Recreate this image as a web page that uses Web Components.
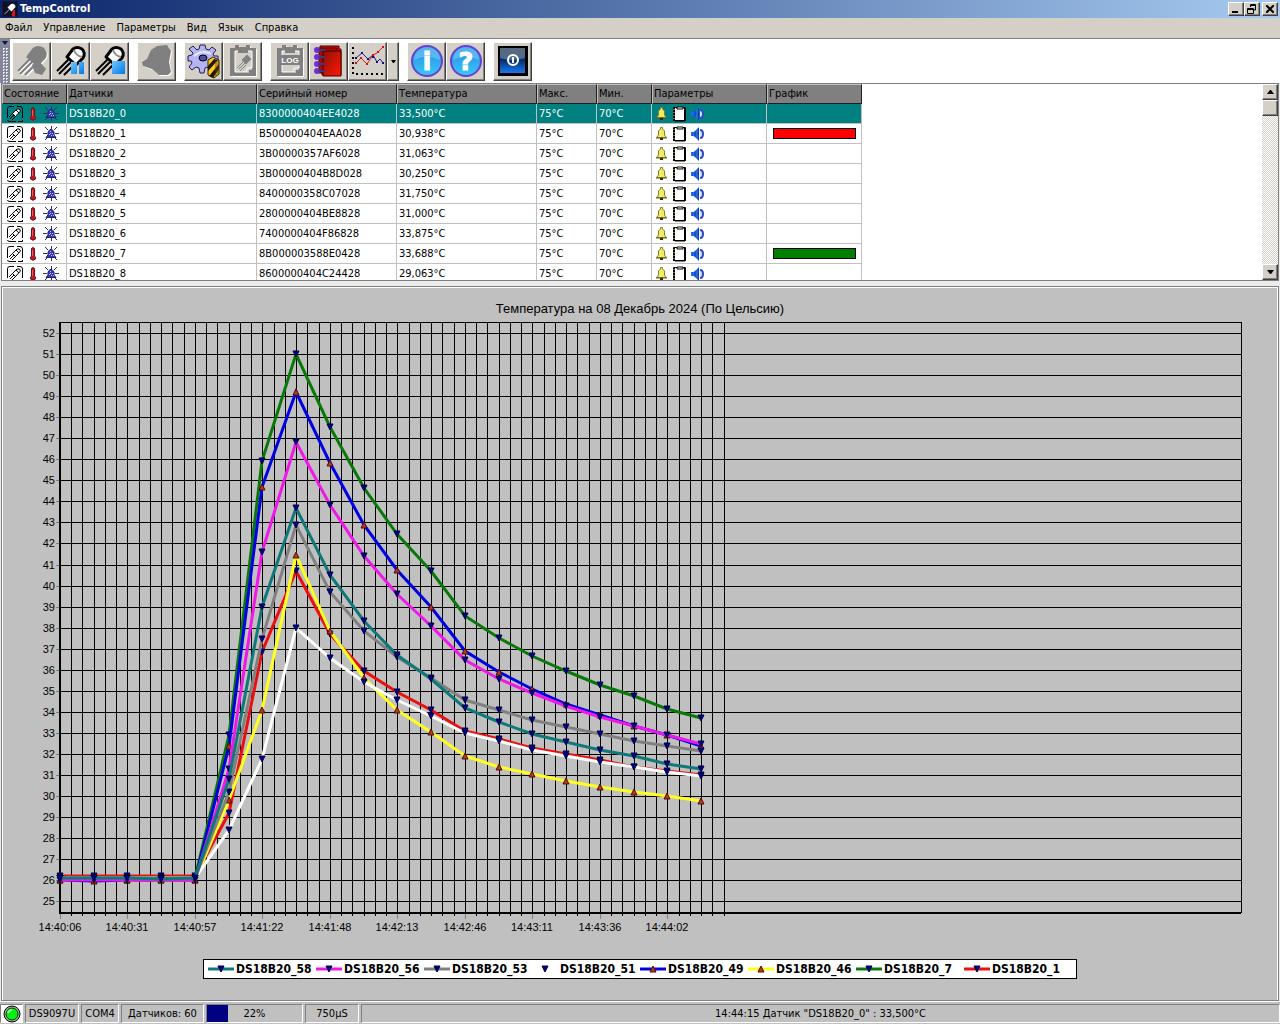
<!DOCTYPE html>
<html lang="ru">
<head>
<meta charset="utf-8">
<title>TempControl</title>
<style>
  html, body { height: 100%; }
  body {
    margin: 0;
    display: flex;
    flex-direction: column;
    overflow: hidden;
    background: #ececec;
    color: #000;
    font: 11px/14px Tahoma, "DejaVu Sans Condensed", "Noto Sans", sans-serif;
  }
</style>
</head>
<body>
<tc-titlebar>TempControl</tc-titlebar>
<tc-menubar>
  <tc-menu>Файл</tc-menu>
  <tc-menu>Управление</tc-menu>
  <tc-menu>Параметры</tc-menu>
  <tc-menu>Вид</tc-menu>
  <tc-menu>Язык</tc-menu>
  <tc-menu>Справка</tc-menu>
</tc-menubar>
<tc-toolbar></tc-toolbar>
<tc-sensors></tc-sensors>
<tc-chart>Температура на 08 Декабрь 2024 (По Цельсию)</tc-chart>
<tc-statusbar>
  <tc-cell kind="led"></tc-cell>
  <tc-cell kind="port">DS9097U</tc-cell>
  <tc-cell kind="com">COM4</tc-cell>
  <tc-cell kind="count">Датчиков: 60</tc-cell>
  <tc-cell kind="load" value="22">22%</tc-cell>
  <tc-cell kind="delay">750µS</tc-cell>
  <tc-cell kind="message">14:44:15 Датчик "DS18B20_0" : 33,500°C</tc-cell>
</tc-statusbar>

<script>
"use strict";

const BEVEL = `
  border: 1px solid;
  border-color: #fff #404040 #404040 #fff;
  box-shadow: inset -1px -1px 0 #808080;
  background: #d4d0c8;`;

const probe = (line, fill, side) => `
  <path d="M2 26 14 14M4 29 17 16M9 30 21 18" fill="none" stroke="${line}" stroke-width="2"/>
  <path d="M12 12 18 4Q22 1 27 4Q31 8 28 13L21 20Z" fill="${fill}"/>
  <path d="M12 12 18 4Q22 1 27 4Q31 8 28 13L21 20Z" fill="none" stroke="${line}" stroke-width="3" stroke-linejoin="round"/>
  <path d="M19 5Q21 11 27 12" fill="none" stroke="${side}" stroke-width="2"/>`;

const clip = (inner) => `
  <g fill="#fff" transform="translate(1 1)"><path d="M3 3H8V0H12V2H19V0H23V3H29V31H3Z"/></g>
  <path d="M3 3H8V0H12V2H19V0H23V3H29V31H3Z" fill="#808080"/>
  <path d="M8 6H25V23H20V27H8Z" fill="#d4d0c8" stroke="#fff"/>
  <path d="M11 3H21V8H11Z" fill="#808080"/>
  <path d="M21 28V24H25" fill="none" stroke="#fff"/>
  ${inner}`;

const disc = (char) => `
  <circle cx="16" cy="16" r="15" fill="url(#sky)" stroke="#6a3fd0" stroke-width="2"/>
  <path d="M3 15A13 13 0 0 1 29 15Q16 8 3 15Z" fill="#8fdcff" opacity=".45"/>
  <text x="16" y="25" text-anchor="middle" font-family="DejaVu Sans" font-weight="bold" font-size="25" fill="#fff" stroke="#fff">${char}</text>`;

const rings = [5, 12, 19, 26];

// 32x32 drawings of the toolbar
const ICONS = {
  probeOff: `<g transform="translate(1 1)">${probe("#fff", "#fff", "#fff")}</g>
    ${probe("#808080", "#808080", "#808080")}
    <path d="M16 20 22 15 30 24 26 30 19 28Z" fill="#808080"/>`,
  probePause: `${probe("#000", "#fff", "#909090")}
    <path d="M16 17H22V29H16ZM24 17H29V29H24Z" fill="url(#blue)"/>`,
  probeStop: `${probe("#000", "#fff", "#909090")}
    <path d="M18 16H31V29H18Z" fill="url(#blue)"/>`,
  hand: `<path d="M2 18 7 15 11 6 17 2 27 1 31 7 29 18 31 28 28 31H19L12 25 3 22Z" fill="#fff"/>
    <path d="M1 17 6 14 10 5 16 1 26 0 30 6 28 17 30 27 27 30H18L11 24 2 21Z" fill="#808080"/>`,
  setup: `
    <path d="M12 0H17L18 4 21 5 24 2 28 5 25 9 26 11H30V16L26 17 24 19 27 23 23 26 19 22 17 23 16 28H12L11 23 8 22 4 25 1 22 4 18 3 16H0V11L4 10 5 8 1 4 5 1 9 5 11 4Z" fill="#b4b4f4" stroke="#202050"/>
    <path d="M6 11Q14 4 23 9" fill="none" stroke="#e8e8ff" stroke-width="2"/>
    <ellipse cx="15" cy="13" rx="4" ry="3" fill="#5050a0" stroke="#000"/>
    <path d="M20 15 25 12 31 15V29L26 33 20 30Z" fill="#ffc820" stroke="#302000"/>
    <path d="M20 21 26 14 30 15 20 26ZM21 31 31 19V24L25 33Z" fill="#201800"/>
    <path d="M27 17V32L31 29V15Z" fill="#604000" opacity=".4"/>`,
  clipProbe: clip(`<g fill="none" stroke="#808080"><path d="M10 23 16 17M12 24 18 18M13 26 19 20" stroke-width="1"/><path d="M16 15 20 11 23 14 19 18Z" fill="#808080" stroke-width="2"/></g>`),
  clipLog: clip(`<path d="M6 10H26V20H6Z" fill="#808080"/>
    <text x="16" y="18" text-anchor="middle" font-family="Liberation Sans" font-weight="bold" font-size="8" fill="#fff">LOG</text>`),
  book: `<path d="M7 1H26V4H28V30H9V27H7Z" fill="#d01010" stroke="#500000"/>
    <path d="M6 3H24V28H6Z" fill="#b00808" stroke="#600000"/>
    <path d="M10 6H28V31H10Z" fill="url(#cover)" stroke="#400000"/>
    ${rings.map(y => `<circle cx="4" cy="${y}" r="3" fill="#7030d0"/><path d="M5 ${y}H12" stroke="#304080" stroke-width="2"/>`).join("")}`,
  graph: `<g fill="#000">${[2, 7, 12, 17, 22, 27].map(v => `<path d="M0 ${v}h2v2h-2Z"/>`).join("")}
    ${[5, 10, 15, 20, 25, 30].map(v => `<path d="M${v - 1} 28h2v2h-2Z"/>`).join("")}</g>
    <g fill="none"><path d="M4 13 10 8 16 14 21 10 25 17 28 14 31 18" stroke="#202090"/>
    <path d="M4 18 9 13 15 19 21 10 25 8 31 2" stroke="#d02020"/></g>
    <g fill="#101080"><path d="M3 12h2v2h-2ZM9 7h2v2h-2ZM15 13h2v2h-2ZM24 16h2v2h-2ZM30 17h2v2h-2ZM20 11h2v2h-2Z"/></g>
    <g fill="#d01010"><path d="M3 17h2v2h-2ZM8 12h2v2h-2ZM14 18h2v2h-2ZM20 9h2v2h-2ZM30 1h2v2h-2ZM25 6h2v2h-2Z"/></g>`,
  info: disc("i"),
  help: disc("?"),
  power: `<path d="M1 1H31V31H1Z" fill="#000"/>
    <path d="M3 3H28V28H3Z" fill="url(#deep)"/>
    <path d="M3 3H28V13Q15 17 3 13Z" fill="#8090a0" opacity=".6"/>
    <circle cx="16" cy="15" r="5" fill="none" stroke="#fff" stroke-width="2"/>
    <path d="M16 12V18" stroke="#fff" stroke-width="2"/>`,
  app: `<path d="M1 1H31V31H1Z" fill="#101020"/>
    <path d="M5 26 15 17" stroke="#a0a0d0" stroke-width="2"/>
    <path d="M11 13 18 6Q26 4 27 12L19 21Z" fill="#fff"/>
    <path d="M22 18H26V31H20V26Z" fill="#e01020"/>`
};

const DEFS = `<defs>
  <linearGradient id="sky" x1="0" y1="0" x2="0" y2="1"><stop offset="0" stop-color="#2888e0"/><stop offset="1" stop-color="#38c8f8"/></linearGradient>
  <linearGradient id="blue" x1="0" y1="0" x2="1" y2="1"><stop offset="0" stop-color="#70c8ff"/><stop offset="1" stop-color="#0078e8"/></linearGradient>
  <linearGradient id="cover" x1="0" y1="0" x2="1" y2="1"><stop offset="0" stop-color="#901000"/><stop offset="1" stop-color="#ff1808"/></linearGradient>
  <linearGradient id="deep" x1="0" y1="0" x2="0" y2="1"><stop offset="0" stop-color="#203050"/><stop offset=".5" stop-color="#083070"/><stop offset="1" stop-color="#1878f0"/></linearGradient>
</defs>`;

// 16x16 drawings of the list
const SMALL = {
  probe: `<path d="M.5 12V2.5Q.5.5 3 .5H7M10 .5H13Q15.500.5 15.500 3V12M15.500 14V15.500H11M9 15.500H3Q.5 15.500.5 14" fill="none" stroke="#000"/>
    <path d="M2 11 6 7M3 13 8 8M5 14 9 10" stroke="#000" fill="none"/>
    <path d="M5.500 7.500 10 3Q13 2 13.500 5L8.500 10.500Z" fill="#fff" stroke="#000"/>
    <path d="M9 4 12 7" stroke="#000"/>`,
  therm: `<path d="M6.500 2.500Q8 .5 9.500 2.500V10Q11 11 10.500 13Q8 15.500 5.500 13Q5 11 6.500 10Z" fill="#c01820" stroke="#701018"/><path d="M7.500 4V10" stroke="#e86060"/>`,
  alarm: `<path d="M2 1 5 4M14 1 11 4M0 7.500H4M16 7.500H12M2 14 4 12M14 14 12 12M8.500 0V3M8.500 12V15" stroke="#303050"/>
    <path d="M3 11.500 5 9V6L7 3.500H9L11 6V9L13 11.500Z" fill="#3838b8" stroke="#202080"/>
    <path d="M7 5h1v1h-1ZM9 7h1v1h-1ZM6 8h1v1h-1ZM8 9h1v1h-1ZM10 9h1v1h-1ZM7 7h1v1h-1Z" fill="#c0c0ff"/>`,
  bell: `<path d="M2.500 11.500 4.500 9V5L6.500 3V1.500H8.500V3L10.500 5V9L12.500 11.500Z" fill="#f4ec60" stroke="#808030"/>
    <path d="M2 12H13" stroke="#606020"/><path d="M6 12H9V14H6Z" fill="#303010"/>`,
  page: `<path d="M1.500 1.500H13.500V14.500H1.500Z" fill="#fff" stroke="#000"/>
    <path d="M2 2V15" stroke="#000" stroke-width="2"/><path d="M2 3V14" stroke="#e0e080" stroke-dasharray="1 2"/>
    <path d="M13 2V15" stroke="#000" stroke-width="2"/><path d="M3 15H13" stroke="#000"/>
    <path d="M5 1H11V3H5Z" fill="#fff" stroke="#000"/>`,
  sound: `<path d="M1 6H4L9 1V15L4 10H1Z" fill="#2068e8"/><path d="M8.500 2V14M5 5V11" stroke="#1038a8"/>
    <path d="M10 4Q13 4 13 8T10 12" fill="#d8e4ff" stroke="#3048c0" stroke-width="2"/>`
};

const small = (name) => `<svg width="16" height="16" viewBox="0 0 16 16" aria-hidden="true">${SMALL[name]}</svg>`;

class TcElement extends HTMLElement {
  constructor() {
    super();
    this.attachShadow({ mode: "open" });
  }
  paint(style, html) {
    const template = document.createElement("template");
    template.innerHTML = `<style>${style}</style>${html}`;
    this.shadowRoot.replaceChildren(template.content.cloneNode(true));
  }
}

class TcTitlebar extends TcElement {
  connectedCallback() {
    this.paint(`
      :host {
        display: flex; align-items: center; flex: none; box-sizing: border-box;
        height: 18px; padding: 0 2px; color: #fff;
        background: linear-gradient(to right, #0a246a, #a6caf0);
      }
      h1 { flex: 1; margin: 0 0 0 2px; font: inherit; font-weight: bold; }
      button { width: 16px; height: 14px; padding: 0; display: grid; place-items: center; ${BEVEL} }
      button:last-child { margin-left: 2px; }
    `, `
      <svg width="16" height="16" viewBox="0 0 32 32" aria-hidden="true">${ICONS.app}</svg>
      <h1><slot></slot></h1>
      <button aria-label="Свернуть"><svg width="10" height="10"><path d="M1 7H7V9H1Z"/></svg></button>
      <button aria-label="Восстановить"><svg width="10" height="10" fill="none" stroke="#000"><path d="M3.500 3V.5H8.500V6H7M3 1.500H9M.5 4.500H6.500V9.500H.5ZM0 5.500H7"/></svg></button>
      <button aria-label="Закрыть"><svg width="8" height="8" stroke="#000" stroke-width="2"><path d="M0 0 8 8M8 0 0 8"/></svg></button>
    `);
  }
}

class TcMenubar extends TcElement {
  connectedCallback() {
    this.paint(`
      :host {
        display: flex; align-items: center; gap: 11px; flex: none;
        height: 20px; padding: 0 5px;
        background: #d4d0c8; border-bottom: 1px solid #808080;
      }
    `, `<slot></slot>`);
  }
}

class TcMenu extends TcElement {
  connectedCallback() {
    this.paint(`
      :host { display: block; }
      button { display: block; border: 0; padding: 0; background: none; color: inherit; font: inherit; }
    `, `<button><slot></slot></button>`);
  }
}

class TcTool extends TcElement {
  connectedCallback() {
    const off = this.hasAttribute("off") ? "disabled" : "";
    this.paint(`
      :host { display: block; }
      button {
        display: grid; place-items: center; box-sizing: border-box;
        width: 39px; height: 39px; padding: 0; ${BEVEL}
      }
      :host([narrow]) button { width: 12px; }
      svg { display: block; overflow: visible; }
    `, `<button ${off} aria-label="${this.getAttribute("label")}">${this.hasAttribute("narrow")
      ? `<svg width="5" height="3"><path d="M0 0H5L3 3H2Z"/></svg>`
      : `<svg width="32" height="32" viewBox="0 0 32 32">${DEFS}${ICONS[this.getAttribute("icon")]}</svg>`}</button>`);
  }
}

class TcToolbar extends TcElement {
  connectedCallback() {
    this.paint(`
      :host { display: flex; align-items: center; gap: 8px; flex: none; height: 44px; background: #fff; }
      .grip { align-self: stretch; width: 10px; margin-right: -6px; background: #85859a; display: flex; flex-direction: column; align-items: center; gap: 3px; padding-top: 2px; }
      .dots { flex: 1; width: 6px; background: conic-gradient(#e8e8f0 25%, #85859a 0) 0 0 / 3px 3px; }
      .group { display: flex; }
    `, `
      <div class="grip"><svg width="6" height="4"><path d="M0 0H6L3 4Z" fill="#101050"/></svg><div class="dots"></div></div>
      <div class="group">
        <tc-tool off icon="probeOff" label="Старт"></tc-tool>
        <tc-tool icon="probePause" label="Пауза"></tc-tool>
        <tc-tool icon="probeStop" label="Стоп"></tc-tool>
      </div>
      <div class="group"><tc-tool off icon="hand" label="Тревога"></tc-tool></div>
      <div class="group">
        <tc-tool icon="setup" label="Настройка"></tc-tool>
        <tc-tool off icon="clipProbe" label="Датчик"></tc-tool>
      </div>
      <div class="group">
        <tc-tool off icon="clipLog" label="Журнал"></tc-tool>
        <tc-tool icon="book" label="Книга"></tc-tool>
        <tc-tool icon="graph" label="График"></tc-tool>
        <tc-tool narrow label="Список графиков"></tc-tool>
      </div>
      <div class="group">
        <tc-tool icon="info" label="О программе"></tc-tool>
        <tc-tool icon="help" label="Помощь"></tc-tool>
      </div>
      <div class="group"><tc-tool icon="power" label="Выход"></tc-tool></div>
    `);
  }
}

const SENSORS = [
  ["DS18B20_0", "8300000404EE4028", "33,500°C"],
  ["DS18B20_1", "B500000404EAA028", "30,938°C", "#ff0000"],
  ["DS18B20_2", "3B00000357AF6028", "31,063°C"],
  ["DS18B20_3", "3B00000404B8D028", "30,250°C"],
  ["DS18B20_4", "8400000358C07028", "31,750°C"],
  ["DS18B20_5", "2800000404BE8828", "31,000°C"],
  ["DS18B20_6", "7400000404F86828", "33,875°C"],
  ["DS18B20_7", "8B000003588E0428", "33,688°C", "#008000"],
  ["DS18B20_8", "8600000404C24428", "29,063°C"]
];

class TcSensors extends TcElement {
  connectedCallback() {
    const heads = ["Состояние", "Датчики", "Серийный номер", "Температура", "Макс.", "Мин.", "Параметры", "График"];
    const widths = [65, 190, 140, 140, 60, 55, 115, 95];
    this.paint(`
      :host {
        display: flex; flex: none; box-sizing: border-box; height: 198px; margin: 0 1px 5px;
        background: #fff; border: 1px solid #808080;
      }
      .view { flex: 1; overflow: hidden; }
      table { border-spacing: 0; table-layout: fixed; width: 860px; }
      th, td { box-sizing: border-box; height: 20px; padding: 0 2px; text-align: left; white-space: nowrap; overflow: hidden; }
      th { font-weight: normal; background: #808080; border: 1px solid; border-color: #c0c0c0 #202020 #202020 #c0c0c0; padding: 0 1px; }
      td { border: solid #c0c0c0; border-width: 0 1px 1px 0; }
      .on td { background: #008080; color: #fff; }
      .icons { display: flex; gap: 2px; }
      .state { padding-left: 3px; }
      .bar { height: 9px; margin: 0 3px 0 4px; border: 1px solid #000; }
      svg { display: block; }
      .scroll { display: flex; flex-direction: column; width: 16px; background: conic-gradient(#d4d0c8 25%, #fff 0 50%, #d4d0c8 0 75%, #fff 0) 0 0 / 2px 2px; }
      .scroll button, .thumb { box-sizing: border-box; height: 16px; padding: 0; display: grid; place-items: center; ${BEVEL} }
      .thumb { margin-bottom: auto; }
    `, `
      <div class="view"><table>
        <colgroup>${widths.map(w => `<col style="width:${w}px">`).join("")}</colgroup>
        <thead><tr>${heads.map(h => `<th>${h}</th>`).join("")}</tr></thead>
        <tbody>${SENSORS.map(([name, serial, temp, color], i) => `
          <tr class="${i === 0 ? "on" : ""}">
            <td><div class="icons state">${small("probe")}${small("therm")}${small("alarm")}</div></td>
            <td>${name}</td><td>${serial}</td><td>${temp}</td><td>75°C</td><td>70°C</td>
            <td><div class="icons">${small("bell")}${small("page")}${small("sound")}</div></td>
            <td>${color ? `<div class="bar" style="background:${color}"></div>` : ""}</td>
          </tr>`).join("")}</tbody>
      </table></div>
      <div class="scroll">
        <button class="up" aria-label="Вверх"><svg width="7" height="4"><path d="M0 4 3 0H4L7 4Z"/></svg></button>
        <div class="thumb"></div>
        <button class="down" aria-label="Вниз"><svg width="7" height="4"><path d="M0 0H7L4 4H3Z"/></svg></button>
      </div>
    `);
    const view = this.shadowRoot.querySelector(".view");
    this.shadowRoot.querySelector(".up").onclick = () => view.scrollBy(0, -20);
    this.shadowRoot.querySelector(".down").onclick = () => view.scrollBy(0, 20);
  }
}

class TcCell extends TcElement {
  connectedCallback() {
    const kind = this.getAttribute("kind");
    let body = `<span><slot></slot></span>`;
    if (kind === "led") {
      body = `<svg width="18" height="18" viewBox="0 0 18 18" role="img" aria-label="Связь"><circle cx="9" cy="9" r="8" fill="#b0b0b0" stroke="#000"/><circle cx="9" cy="9" r="6" fill="#00f010" stroke="#003800"/><path d="M5 8Q6 5 9 5" fill="none" stroke="#a0ffa0" stroke-width="2"/></svg>`;
    }
    if (kind === "load") {
      body = `<progress max="100" value="${this.getAttribute("value")}" aria-label="Загрузка"></progress>` + body;
    }
    this.paint(`
      :host {
        display: grid; box-sizing: border-box; align-items: center; justify-items: center; white-space: nowrap;
        border: 1px solid; border-color: #808080 #fff #fff #808080; width: 54px;
      }
      svg, span, progress { grid-area: 1 / 1; }
      :host([kind=led]) { width: 23px; background: #fff; }
      :host([kind=com]) { width: 38px; }
      :host([kind=count]) { width: 83px; }
      :host([kind=load]) { width: 97px; }
      :host([kind=message]) { flex: 1; }
      progress { appearance: none; width: 100%; height: 100%; border: 0; background: none; }
      progress::-webkit-progress-bar { background: none; }
      progress::-webkit-progress-value { background: #000080; }
      span { z-index: 1; }
    `, body);
  }
}

class TcStatusbar extends TcElement {
  connectedCallback() {
    this.paint(`
      :host {
        display: flex; gap: 2px; flex: none; box-sizing: border-box;
        height: 23px; padding: 2px 0 1px; background: #c0c0c0; border-top: 1px solid #fff;
      }
    `, `<slot></slot>`);
  }
}

// plot width in time steps; the readings stop after 57 of them
const STEPS = 105;
const TIMES = ["14:40:06", "14:40:31", "14:40:57", "14:41:22", "14:41:48", "14:42:13", "14:42:46", "14:43:11", "14:43:36", "14:44:02"];
const SERIES = [
  { name: "DS18B20_58", color: "#107878", data: [26.1, 26.1, 26.1, 26.05, 26.1, 30.8, 39, 43.7, 40.5, 38.3, 36.7, 35.55, 34.2, 33.5, 32.95, 32.55, 32.2, 31.9, 31.55, 31.3] },
  { name: "DS18B20_56", color: "#f018e8", data: [26, 26, 26, 26, 26, 31.3, 41.6, 46.8, 43.85, 41.4, 39.6, 38.1, 36.45, 35.55, 34.9, 34.3, 33.75, 33.35, 32.9, 32.5] },
  { name: "DS18B20_53", color: "#808080", data: [26.1, 26.1, 26.1, 26.1, 26.1, 30.2, 37.45, 42.9, 39.7, 37.85, 36.6, 35.6, 34.55, 34.1, 33.6, 33.3, 32.95, 32.6, 32.4, 32.15] },
  { name: "DS18B20_51", color: "#ffffff", data: [26.1, 26.1, 26.1, 26.1, 26.1, 28.4, 31.75, 38, 36.55, 35.4, 34.55, 33.8, 33, 32.6, 32.2, 31.9, 31.6, 31.4, 31.15, 30.95] },
  { name: "DS18B20_49", color: "#0000e0", up: true, data: [26, 25.95, 26, 26, 26, 32.4, 44.7, 49.2, 45.8, 42.9, 40.75, 39, 36.9, 35.9, 35.1, 34.4, 33.85, 33.35, 32.9, 32.4] },
  { name: "DS18B20_46", color: "#ffff20", up: true, data: [26, 26, 26, 26, 26, 29.8, 34.1, 41.45, 37.85, 35.6, 34.1, 33.05, 31.9, 31.4, 31.05, 30.7, 30.45, 30.2, 30, 29.75] },
  { name: "DS18B20_7", color: "#087808", data: [26.1, 26.1, 26.1, 26.1, 26.1, 32.9, 45.9, 51, 47.55, 44.65, 42.45, 40.7, 38.55, 37.5, 36.65, 35.95, 35.3, 34.75, 34.15, 33.7] },
  { name: "DS18B20_1", color: "#e81010", data: [26.2, 26.2, 26.2, 26.2, 26.2, 29.2, 36.85, 40.7, 37.7, 35.95, 34.95, 34.1, 33.1, 32.7, 32.3, 32, 31.7, 31.4, 31.2, 31] }
];

const marker = (x, y, up) => up
  ? `<path d="M${x - 3} ${y + 3}H${x + 3}L${x} ${y - 3}Z" fill="#c83020" stroke="#401010"/>`
  : `<path d="M${x - 3} ${y - 3}H${x + 3}L${x} ${y + 3}Z" fill="#000090" stroke="#000040"/>`;

class TcLegend extends TcElement {
  connectedCallback() {
    this.paint(`
      :host {
        display: grid; grid-template-columns: repeat(8, 108px); box-sizing: border-box; align-self: center;
        height: 20px; padding: 0 4px; margin-bottom: 21px;
        background: #fff; border: 1px solid #000; align-items: center;
        font: bold 12px/16px "DejaVu Sans Condensed", sans-serif;
      }
      div { display: flex; align-items: center; gap: 2px; }
    `, SERIES.map(s => `<div><svg width="26" height="10" viewBox="0 0 26 10" aria-hidden="true"><path d="M0 5H26" stroke="${s.color}" stroke-width="3"/>${marker(13, 5, s.up)}</svg>${s.name}</div>`).join(""));
  }
}

class TcChart extends TcElement {
  connectedCallback() {
    this.paint(`
      :host {
        display: flex; flex-direction: column; flex: 1; min-height: 0;
        margin: 0 1px; background: #c0c0c0; border: 1px solid #808080;
        box-shadow: inset 1px 1px 0 #fff, inset -1px 0 0 #fff;
      }
      h2 { flex: none; margin: 0; padding-top: 14px; height: 16px; font: 13px/16px "Liberation Sans", sans-serif; text-align: center; }
      .plot { flex: 1; min-height: 0; }
      svg { display: block; font: 11px "Liberation Sans", sans-serif; }
    `, `<h2><slot></slot></h2><div class="plot"></div><tc-legend></tc-legend>`);
    this.plot = this.shadowRoot.querySelector(".plot");
    this.draw();
    new ResizeObserver(() => this.draw()).observe(this.plot);
  }

  draw() {
    const w = this.plot.clientWidth;
    const h = this.plot.clientHeight;
    const left = 58, right = w - 37, top = 5, bottom = h - 46;
    const px = (step) => Math.round(left + step * (right - left) / STEPS);
    const py = (temp) => Math.round(bottom - (temp - 24.45) * (bottom - top) / 28.07);

    let grid = "", labels = "";
    for (let t = 25; t <= 52; t++) {
      grid += `<path d="M${left} ${py(t)}H${right}" stroke="#000"/><path d="M${left - 4} ${py(t)}H${left}" stroke="#808080"/>`;
      labels += `<text x="${left - 5}" y="${py(t) + 4}" text-anchor="end">${t}</text>`;
    }
    for (let s = 0; s <= 59; s++) {
      grid += `<path d="M${px(s)} ${top}V${bottom + 3}" stroke="#000"/>`;
    }
    TIMES.forEach((time, i) => {
      grid += `<path d="M${px(i * 6)} ${bottom + 1}v5" stroke="#808080"/>`;
      labels += `<text x="${px(i * 6)}" y="${bottom + 18}" text-anchor="middle">${time}</text>`;
    });
    grid += `<path d="M${left} ${top}H${right}V${bottom}" fill="none" stroke="#000"/>
      <path d="M${left} ${top}V${bottom}H${right}" fill="none" stroke="#000" stroke-width="2"/>`;

    // the first series of the legend lies on top
    const lines = [...SERIES].reverse().map(({ color, data, up }) => {
      const points = data.map((t, i) => [px(i * 3), py(t)]);
      return `<polyline points="${points.join(" ")}" fill="none" stroke="${color}" stroke-width="3"/>`
        + points.map(([x, y]) => marker(x, y, up)).join("");
    }).join("");

    this.plot.innerHTML = `<svg width="${w}" height="${h}" role="img" aria-label="График температуры">
      <g shape-rendering="crispEdges">${grid}</g>${lines}${labels}</svg>`;
  }
}

customElements.define("tc-titlebar", TcTitlebar);
customElements.define("tc-menubar", TcMenubar);
customElements.define("tc-menu", TcMenu);
customElements.define("tc-tool", TcTool);
customElements.define("tc-toolbar", TcToolbar);
customElements.define("tc-sensors", TcSensors);
customElements.define("tc-cell", TcCell);
customElements.define("tc-statusbar", TcStatusbar);
customElements.define("tc-legend", TcLegend);
customElements.define("tc-chart", TcChart);
</script>
</body>
</html>
